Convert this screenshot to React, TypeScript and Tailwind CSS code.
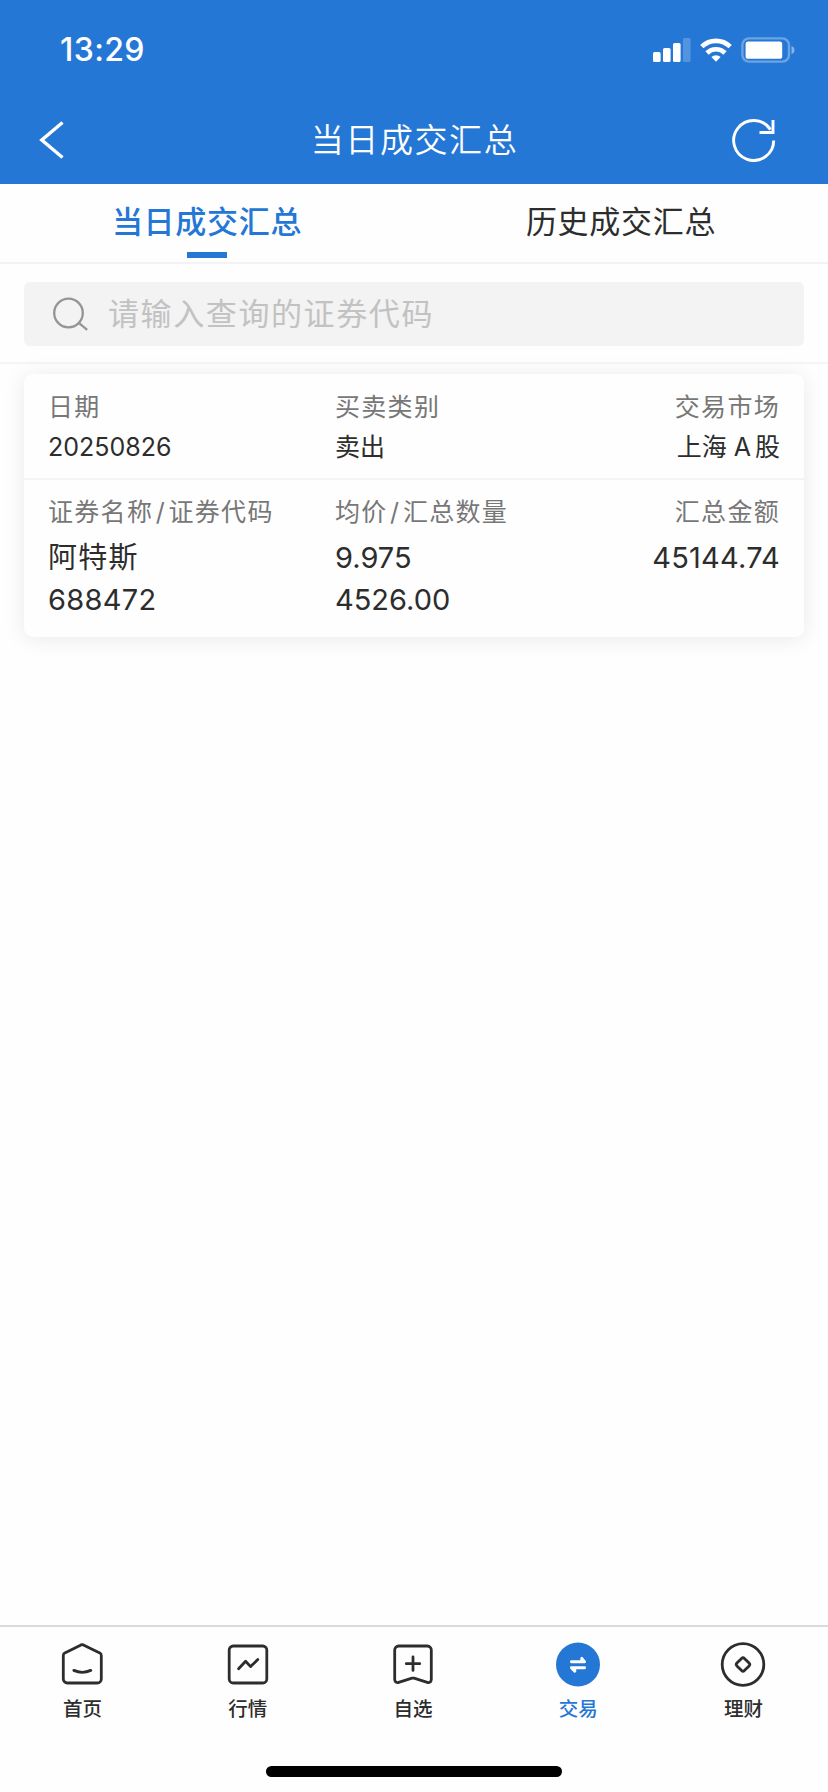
import React from 'react';

type NavItem = {
  label: string;
  icon: React.ReactNode;
  active?: boolean;
};

const navItems: NavItem[] = [
  {
    label: '首页',
    icon: (
      <g fill="none" stroke="currentColor" strokeWidth="2.8" strokeLinecap="round" strokeLinejoin="round">
        <path d="M22 4.9a3 3 0 0 1 2.4 0L40.8 12.9a3 3 0 0 1 1.5 2.6V39a4 4 0 0 1-4 4H8.3a4 4 0 0 1-4-4V15.5a3 3 0 0 1 1.5-2.6Z" />
        <path d="M14.8 30.4q8.5 3.8 17 0" />
      </g>
    ),
  },
  {
    label: '行情',
    icon: (
      <g fill="none" stroke="currentColor" strokeWidth="2.8" strokeLinecap="round" strokeLinejoin="round">
        <rect x="5.2" y="6" width="37.6" height="37" rx="4" />
        <path d="M14.6 28.8l7-7.6 5 5.4 7.2-7" />
      </g>
    ),
  },
  {
    label: '自选',
    icon: (
      <g fill="none" stroke="currentColor" strokeWidth="2.8" strokeLinecap="round" strokeLinejoin="round">
        <path d="M9.7 6h28.6a4 4 0 0 1 4 4v29.6a3 3 0 0 1-4 2.8L25 38.2a4 4 0 0 0-2 0L9.7 42.4a3 3 0 0 1-4-2.8V10a4 4 0 0 1 4-4Z" />
        <path d="M24 17v13.4M17.3 23.7h13.4" />
      </g>
    ),
  },
  {
    label: '交易',
    active: true,
    icon: (
      <>
        <circle cx="24" cy="24.5" r="22" fill="currentColor" />
        <g fill="none" stroke="#fff" strokeWidth="2.9" strokeLinecap="round" strokeLinejoin="round">
          <path d="M17.4 21.8h13.2l-2.8-3.4v2.6" />
          <path d="M30.6 27.7H17.4l3.4 3.6v-2.6" />
        </g>
      </>
    ),
  },
  {
    label: '理财',
    icon: (
      <g fill="none" stroke="currentColor" strokeWidth="2.8" strokeLinejoin="round">
        <circle cx="24" cy="24.5" r="20.8" />
        <rect x="18.7" y="19.2" width="10.6" height="10.6" rx="2" transform="rotate(45 24 24.5)" />
      </g>
    ),
  },
];

function StatusBar() {
  return (
    <div className="flex h-[99px] items-center justify-between pr-[32px] pl-[60px]">
      <span className="text-[32px] leading-[40px] font-[550] tracking-[0.4px]">13:29</span>
      <div className="flex items-center">
        <svg width="38" height="24" viewBox="0 0 38 24" fill="#fff">
          <rect x="0" y="14" width="7.6" height="10" rx="1.6" />
          <rect x="10" y="10" width="7.6" height="14" rx="1.6" />
          <rect x="20" y="5" width="7.6" height="19" rx="1.6" />
          <rect x="30" y="0" width="7.6" height="24" rx="1.6" opacity="0.22" />
        </svg>
        <svg className="ml-[9px]" width="32" height="24" viewBox="0 0 32 24">
          <g fill="none" stroke="#fff" strokeWidth="4.6">
            <path d="M1.8 8.7a20.2 20.2 0 0 1 28.4 0" />
            <path d="M7 15a12.8 12.8 0 0 1 18 0" />
          </g>
          <path d="M16 23.8l-4.6-4.7a6.6 6.6 0 0 1 9.2 0Z" fill="#fff" />
        </svg>
        <svg className="ml-[9px]" width="55" height="26" viewBox="0 0 55 26">
          <rect x="1.4" y="1.4" width="46.6" height="23.2" rx="6.5" fill="none" stroke="#fff" strokeWidth="2.4" opacity="0.33" />
          <rect x="4.6" y="4.4" width="36.6" height="17.4" rx="2.6" fill="#fff" />
          <path d="M50.5 9q3 1 3 4t-3 4Z" fill="#fff" opacity="0.45" />
        </svg>
      </div>
    </div>
  );
}

export default function App() {
  return (
    <div className="flex h-[1792px] w-[828px] flex-col bg-[#fefefe] font-[Inter,'Noto_Sans_CJK_SC',sans-serif] text-[#2d2d2d]">
      <header className="h-[184px] bg-[#2577d6] text-white">
        <StatusBar />
        <div className="flex h-[82px] items-center justify-between pr-[52px] pl-[38px]">
          <svg width="28" height="42" viewBox="0 0 28 42" fill="none" stroke="#fff" strokeWidth="3.4">
            <path d="M24.5 3.5L3.8 21l20.7 17.5" />
          </svg>
          <h1 className="ml-[31px] text-[33px] leading-[40px] font-[350] tracking-[1.6px]">当日成交汇总</h1>
          <svg width="44" height="44" viewBox="0 0 44 44" fill="none" stroke="#fff" strokeWidth="2.9">
            <path d="M41.7 22.5A20 20 0 1 1 38.5 11.6" />
            <path d="M41 2v12.5H27.5" />
          </svg>
        </div>
      </header>

      <nav className="grid h-[80px] grid-cols-2 border-b-2 border-[#f2f3f4] text-[31px] tracking-[0.7px]">
        <button className="flex flex-col items-center text-[#2577d6]">
          <span className="mt-[17px] h-[51px] leading-[41px] font-medium">当日成交汇总</span>
          <span className="h-[6px] w-[40px] bg-[#2577d6]" />
        </button>
        <button className="flex flex-col items-center">
          <span className="mt-[17px] leading-[41px]">历史成交汇总</span>
        </button>
      </nav>

      <div className="h-[100px] border-b-2 border-[#f4f5f6] px-[24px] pt-[18px]">
        <label className="flex h-[64px] items-center rounded-[6px] bg-[#f3f3f3] pl-[28px]">
          <svg width="38" height="36" viewBox="0 0 38 36" fill="none" stroke="#959595" strokeWidth="2.3">
            <circle cx="16.5" cy="17" r="14.3" />
            <path d="M26.8 26.8l8.4 7" />
          </svg>
          <span className="ml-[18px] text-[31px] leading-[40px] tracking-[1.6px] text-[#c2c2c2]">请输入查询的证券代码</span>
        </label>
      </div>

      <main className="flex-1 px-[24px] pt-[10px]">
        <section className="h-[263px] rounded-[9px] bg-[#fefefe] shadow-[0_2px_22px_rgba(0,0,0,0.085)]">
          <div className="grid h-[106px] grid-cols-[287px_1fr_auto] border-b-2 border-[#f4f4f4] px-[24px] pt-[13px] text-[25px] leading-[40px]">
            <div>
              <p className="tracking-[1.3px] text-[#777]">日期</p>
              <p>20250826</p>
            </div>
            <div>
              <p className="tracking-[1.3px] text-[#777]">买卖类别</p>
              <p>卖出</p>
            </div>
            <div className="text-right">
              <p className="tracking-[1.3px] text-[#777]">交易市场</p>
              <p>
                上海 <span className="mr-[4px]">A</span>股
              </p>
            </div>
          </div>
          <div className="grid grid-cols-[287px_1fr_auto] px-[24px] pt-[12px] text-[29px] leading-[42px]">
            <div>
              <p className="mb-[5px] text-[25px] leading-[40px] tracking-[1.3px] text-[#777]">
                证券名称<span className="mx-[2.5px]">/</span>证券代码
              </p>
              <p className="tracking-[1.3px]">阿特斯</p>
              <p className="tracking-[0.3px]">688472</p>
            </div>
            <div>
              <p className="mb-[5px] text-[25px] leading-[40px] tracking-[1.3px] text-[#777]">
                均价<span className="mx-[2.5px]">/</span>汇总数量
              </p>
              <p>9.975</p>
              <p>4526.00</p>
            </div>
            <div className="text-right">
              <p className="mb-[5px] text-[25px] leading-[40px] tracking-[1.3px] text-[#777]">汇总金额</p>
              <p className="tracking-[0.2px]">45144.74</p>
            </div>
          </div>
        </section>
      </main>

      <footer className="h-[167px] border-t-2 border-[#d9dbda]">
        <div className="grid grid-cols-5 pt-[13px] pr-[2px]">
          {navItems.map((item) => (
            <button
              key={item.label}
              className={item.active ? 'flex flex-col items-center text-[#2577d6]' : 'flex flex-col items-center'}
            >
              <svg width="48" height="48" viewBox="0 0 48 48">
                {item.icon}
              </svg>
              <span className="mt-[6px] text-[19.5px] leading-[30px] font-medium">{item.label}</span>
            </button>
          ))}
        </div>
        <div className="mx-auto mt-[42px] h-[11px] w-[296px] rounded-full bg-black" />
      </footer>
    </div>
  );
}
